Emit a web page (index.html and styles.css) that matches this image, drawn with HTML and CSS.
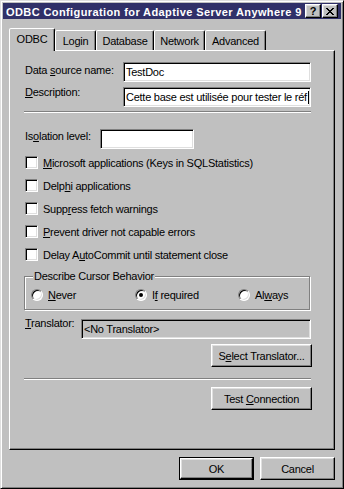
FILE: index.html
```html
<!DOCTYPE html>
<html>
<head>
<meta charset="utf-8">
<link rel="stylesheet" href="styles.css">
</head>
<body>
<div class="window">
  <div class="titlebar">
    <span class="title">ODBC Configuration for Adaptive Server Anywhere 9</span>
    <div class="tbtns">
      <div class="tbtn help">?</div>
      <div class="tbtn close"><svg width="8" height="7" viewBox="0 0 8 7" shape-rendering="crispEdges"><path fill="#000" d="M0 0h2v1H0zM6 0h2v1H6zM1 1h2v1H1zM5 1h2v1H5zM2 2h4v1H2zM3 3h2v1H3zM2 4h4v1H2zM1 5h2v1H1zM5 5h2v1H5zM0 6h2v1H0zM6 6h2v1H6z"/></svg></div>
    </div>
  </div>
  <div class="body">
    <div class="tabs">
      <div class="tab sel t-odbc">ODBC</div>
      <div class="tab t-login">Login</div>
      <div class="tab t-db">Database</div>
      <div class="tab t-net">Network</div>
      <div class="tab t-adv">Advanced</div>
    </div>
    <div class="panel">
      <div class="row r-dsn">
        <span class="lbl lbl-dsn">Data <u>s</u>ource name:</span>
        <div class="field f-right">TestDoc</div>
      </div>
      <div class="row r-desc">
        <span class="lbl lbl-desc"><u>D</u>escription:</span>
        <div class="field f-right">Cette base est utilisée pour tester le réf<span class="caret"></span></div>
      </div>
      <div class="sep sep1"></div>
      <div class="row r-iso">
        <span class="lbl lbl-iso">Is<u>o</u>lation level:</span>
        <div class="field f-iso"></div>
      </div>
      <div class="cb cb-first"><span class="box"></span><span class="txt"><u>M</u>icrosoft applications (Keys in SQLStatistics)</span></div>
      <div class="cb"><span class="box"></span><span class="txt">Delp<u>h</u>i applications</span></div>
      <div class="cb"><span class="box"></span><span class="txt">Supp<u>r</u>ess fetch warnings</span></div>
      <div class="cb"><span class="box"></span><span class="txt"><u>P</u>revent driver not capable errors</span></div>
      <div class="cb"><span class="box"></span><span class="txt">Delay A<u>u</u>toCommit until statement close</span></div>
      <div class="grp">
        <span class="grp-lbl">Describe Cursor Behavior</span>
        <div class="radios">
          <div class="ritem ri1"><span class="radio"></span><span class="rtxt"><u>N</u>ever</span></div>
          <div class="ritem ri2"><span class="radio on"><span class="dot"></span></span><span class="rtxt">I<u>f</u> required</span></div>
          <div class="ritem"><span class="radio"></span><span class="rtxt">Al<u>w</u>ays</span></div>
        </div>
      </div>
      <div class="row r-tr">
        <span class="lbl lbl-tr"><u>T</u>ranslator:</span>
        <div class="field f-tr">&lt;No Translator&gt;</div>
      </div>
      <div class="btnrow r-sel"><div class="btn wide"><span>S<u>e</u>lect Translator...</span></div></div>
      <div class="sep sep2"></div>
      <div class="btnrow r-test"><div class="btn wide"><span>Test <u>C</u>onnection</span></div></div>
    </div>
    <div class="dlg">
      <div class="defbtn"><div class="btn inner"><span>OK</span></div></div>
      <div class="btn dlgbtn"><span>Cancel</span></div>
    </div>
  </div>
</div>
</body>
</html>
```
FILE: styles.css
```css
* { box-sizing: border-box; margin: 0; padding: 0; }
html, body { background: #c0c0c0; }
body {
  font-family: "Liberation Sans", Arial, sans-serif;
  font-size: 11px;
  letter-spacing: -0.25px;
  line-height: 14px;
  color: #000;
}
u { text-decoration: underline; text-underline-offset: 1px; }

.window {
  width: 344px;
  height: 489px;
  border: 1px solid;
  border-color: #dfdfdf #000 #000 #dfdfdf;
  box-shadow: inset 1px 1px #fff, inset -1px -1px #808080;
  padding: 2px;
  display: flex;
  flex-direction: column;
  background: #c0c0c0;
}

.titlebar {
  height: 16px;
  background: #303068;
  display: flex;
  align-items: center;
  padding: 0 3px 0 3px;
  color: #fff;
  flex: none;
}
.title {
  flex: 1;
  font-weight: bold;
  letter-spacing: 0.4px;
  white-space: nowrap;
  overflow: hidden;
  margin-top: 2px;
}
.tbtns { display: flex; gap: 1px; }
.tbtn {
  width: 16px;
  height: 14px;
  background: #c0c0c0;
  border: 1px solid;
  border-color: #fff #000 #000 #fff;
  box-shadow: inset -1px -1px #808080, inset 1px 1px #dfdfdf;
  display: flex;
  align-items: center;
  justify-content: center;
  color: #000;
  font-weight: bold;
  letter-spacing: 0;
  line-height: 12px;
}

.body {
  flex: 1;
  padding: 9px 6px 0 6px;
  display: flex;
  flex-direction: column;
}

.tabs {
  height: 22px;
  display: flex;
  align-items: flex-end;
  position: relative;
  z-index: 1;
  flex: none;
}
.tab {
  height: 20px;
  border: 1px solid;
  border-bottom: none;
  border-color: #fff #000 transparent #fff;
  box-shadow: inset -1px 0 #808080;
  border-radius: 2px 2px 0 0;
  padding-top: 3px;
  text-align: center;
  background: #c0c0c0;
}
.tab.sel { height: 23px; margin-bottom: -1px; }
.t-odbc { width: 46px; }
.t-login { width: 41px; }
.t-db { width: 58px; }
.t-net { width: 51px; }
.t-adv { width: 61px; }

.panel {
  height: 400px;
  flex: none;
  border: 1px solid;
  border-color: #fff #000 #000 #fff;
  box-shadow: inset -1px -1px #808080;
  padding: 0 23px 0 15px;
  display: flex;
  flex-direction: column;
}

.row { display: flex; align-items: flex-start; height: 20px; flex: none; }
.r-dsn { margin-top: 11px; }
.r-desc { margin-top: 5px; }
.r-iso { margin-top: 16px; }
.r-tr { margin-top: 9px; }

.lbl-dsn { margin-top: 1px; }
.lbl-desc { margin-top: -2px; }
.lbl-iso { margin-top: 0; width: 75px; }
.lbl-tr { margin-top: -3px; width: 56px; }

.field {
  height: 20px;
  background: #fff;
  border: 1px solid;
  border-color: #808080 #fff #fff #808080;
  box-shadow: inset 1px 1px #000, inset -1px -1px #dfdfdf;
  padding: 1px 2px;
  line-height: 16px;
  white-space: nowrap;
  overflow: hidden;
}
.f-right { margin-left: auto; width: 188px; }
.f-iso { width: 94px; }
.f-tr { width: 230px; background: #c0c0c0; }
.caret {
  display: inline-block;
  width: 1px;
  height: 13px;
  background: #000;
  vertical-align: -3px;
  margin-left: 1px;
}

.sep {
  height: 2px;
  border-top: 1px solid #808080;
  border-bottom: 1px solid #fff;
  margin-left: -1px;
  flex: none;
}
.sep1 { margin-top: 4px; }
.sep2 { margin-top: 11px; }

.cb { display: flex; align-items: flex-start; height: 14px; margin-top: 9px; flex: none; }
.cb.cb-first { margin-top: 7px; }
.box {
  width: 13px;
  height: 13px;
  flex: none;
  background: #fff;
  border: 1px solid;
  border-color: #808080 #fff #fff #808080;
  box-shadow: inset 1px 1px #000, inset -1px -1px #dfdfdf;
}
.cb .txt { margin-left: 5px; white-space: nowrap; }

.grp {
  margin-top: 14px;
  height: 34px;
  width: 286px;
  margin-left: -1px;
  flex: none;
  border: 1px solid #808080;
  box-shadow: inset 1px 1px #fff, 1px 1px #fff;
  display: flex;
  flex-direction: column;
}
.grp-lbl {
  align-self: flex-start;
  margin-top: -8px;
  margin-left: 8px;
  padding: 0 1px;
  background: #c0c0c0;
  white-space: nowrap;
}
.radios { display: flex; padding-left: 6px; margin-top: 6px; }
.ritem { display: flex; align-items: flex-start; }
.ri1 { width: 104px; }
.ri2 { width: 103px; }
.radio {
  width: 12px;
  height: 12px;
  flex: none;
  border-radius: 50%;
  background: #fff;
  border: 1px solid;
  border-color: #808080 #fff #fff #808080;
  box-shadow: inset 1px 1px #000, inset -1px -1px #dfdfdf;
  display: flex;
  align-items: center;
  justify-content: center;
}
.dot { width: 4px; height: 4px; border-radius: 50%; background: #000; }
.rtxt { margin-left: 5px; margin-top: -1px; white-space: nowrap; }

.btnrow { display: flex; justify-content: flex-end; margin-right: -1px; flex: none; }
.r-sel { margin-top: 5px; }
.r-test { margin-top: 7px; }

.btn {
  height: 23px;
  background: #c0c0c0;
  border: 1px solid;
  border-color: #fff #000 #000 #fff;
  box-shadow: inset -1px -1px #808080, inset 1px 1px #dfdfdf;
  display: flex;
  align-items: center;
  justify-content: center;
  white-space: nowrap;
}
.btn.wide { width: 101px; }

.dlg {
  display: flex;
  justify-content: flex-end;
  gap: 6px;
  margin-top: 7px;
  flex: none;
}
.defbtn { width: 75px; height: 23px; border: 1px solid #000; }
.btn.inner { width: 73px; height: 21px; }
.btn.dlgbtn { width: 75px; }
```
